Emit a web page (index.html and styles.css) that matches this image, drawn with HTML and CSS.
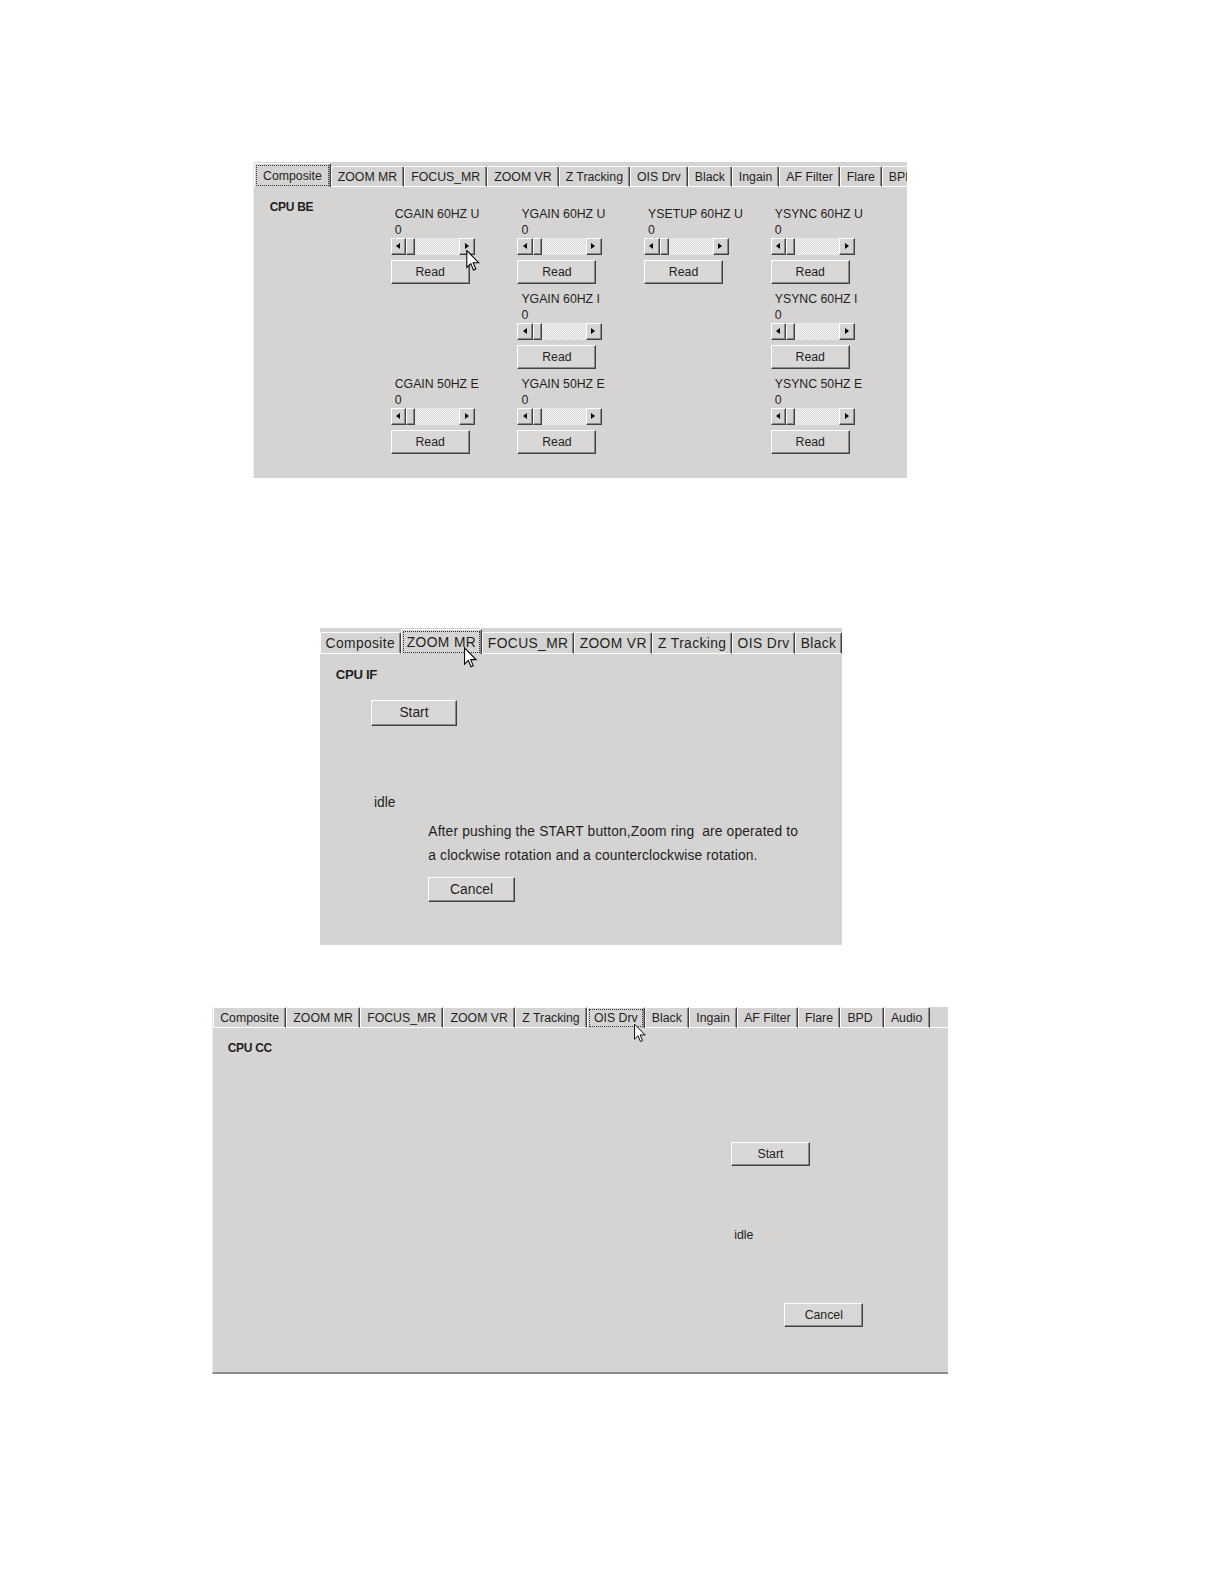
FILE: index.html
```html
<!DOCTYPE html>
<html>
<head>
<meta charset="utf-8">
<link rel="stylesheet" href="styles.css">
</head>
<body>
<div class="page">

  <section class="win p1">
    <div class="tabs">
      <div class="tab sel"><span class="focus">Composite</span></div>
      <div class="tab">ZOOM MR</div>
      <div class="tab">FOCUS_MR</div>
      <div class="tab">ZOOM VR</div>
      <div class="tab">Z Tracking</div>
      <div class="tab">OIS Drv</div>
      <div class="tab">Black</div>
      <div class="tab">Ingain</div>
      <div class="tab">AF Filter</div>
      <div class="tab">Flare</div>
      <div class="tab">BPD</div>
      <div class="fill"></div>
    </div>
    <div class="body">
      <div class="cpu">CPU BE</div>
      <div class="grid">
        <div class="cell"><div class="lbl">CGAIN 60HZ U</div><div class="val">0</div><div class="sb"><span class="arr l"></span><span class="thumb"></span><span class="track"></span><span class="arr r"></span></div><div class="btn">Read</div></div>
        <div class="cell"><div class="lbl">YGAIN 60HZ U</div><div class="val">0</div><div class="sb"><span class="arr l"></span><span class="thumb"></span><span class="track"></span><span class="arr r"></span></div><div class="btn">Read</div></div>
        <div class="cell"><div class="lbl">YSETUP 60HZ U</div><div class="val">0</div><div class="sb"><span class="arr l"></span><span class="thumb"></span><span class="track"></span><span class="arr r"></span></div><div class="btn">Read</div></div>
        <div class="cell"><div class="lbl">YSYNC 60HZ U</div><div class="val">0</div><div class="sb"><span class="arr l"></span><span class="thumb"></span><span class="track"></span><span class="arr r"></span></div><div class="btn">Read</div></div>

        <div class="cell"></div>
        <div class="cell"><div class="lbl">YGAIN 60HZ I</div><div class="val">0</div><div class="sb"><span class="arr l"></span><span class="thumb"></span><span class="track"></span><span class="arr r"></span></div><div class="btn">Read</div></div>
        <div class="cell"></div>
        <div class="cell"><div class="lbl">YSYNC 60HZ I</div><div class="val">0</div><div class="sb"><span class="arr l"></span><span class="thumb"></span><span class="track"></span><span class="arr r"></span></div><div class="btn">Read</div></div>

        <div class="cell"><div class="lbl">CGAIN 50HZ E</div><div class="val">0</div><div class="sb"><span class="arr l"></span><span class="thumb"></span><span class="track"></span><span class="arr r"></span></div><div class="btn">Read</div></div>
        <div class="cell"><div class="lbl">YGAIN 50HZ E</div><div class="val">0</div><div class="sb"><span class="arr l"></span><span class="thumb"></span><span class="track"></span><span class="arr r"></span></div><div class="btn">Read</div></div>
        <div class="cell"></div>
        <div class="cell"><div class="lbl">YSYNC 50HZ E</div><div class="val">0</div><div class="sb"><span class="arr l"></span><span class="thumb"></span><span class="track"></span><span class="arr r"></span></div><div class="btn">Read</div></div>
      </div>
    </div>
    <svg class="cursor" width="14" height="21" viewBox="0 0 12.5 19.5"><path d="M0.5 0.5 L0.5 16.2 L4.2 12.6 L6.7 18.6 L8.9 17.6 L6.4 11.8 L11.6 11.8 Z" fill="#fff" stroke="#000" stroke-width="1"/></svg>
  </section>

  <section class="win p2">
    <div class="tabs">
      <div class="tab">Composite</div>
      <div class="tab sel"><span class="focus">ZOOM MR</span></div>
      <div class="tab">FOCUS_MR</div>
      <div class="tab">ZOOM VR</div>
      <div class="tab">Z Tracking</div>
      <div class="tab">OIS Drv</div>
      <div class="tab">Black</div>
      <div class="fill"></div>
    </div>
    <div class="body">
      <div class="cpu">CPU IF</div>
      <div class="btn start">Start</div>
      <div class="idle">idle</div>
      <div class="note">After pushing the START button,Zoom ring &nbsp;are operated to<br>a clockwise rotation and a counterclockwise rotation.</div>
      <div class="btn cancel">Cancel</div>
    </div>
    <svg class="cursor" width="13" height="21" viewBox="0 0 12.5 19.5"><path d="M0.5 0.5 L0.5 16.2 L4.2 12.6 L6.7 18.6 L8.9 17.6 L6.4 11.8 L11.6 11.8 Z" fill="#fff" stroke="#000" stroke-width="1"/></svg>
  </section>

  <section class="win p3">
    <div class="tabs">
      <div class="tab">Composite</div>
      <div class="tab">ZOOM MR</div>
      <div class="tab">FOCUS_MR</div>
      <div class="tab">ZOOM VR</div>
      <div class="tab">Z Tracking</div>
      <div class="tab sel"><span class="focus">OIS Drv</span></div>
      <div class="tab">Black</div>
      <div class="tab">Ingain</div>
      <div class="tab">AF Filter</div>
      <div class="tab">Flare</div>
      <div class="tab wide">BPD</div>
      <div class="tab">Audio</div>
      <div class="fill"></div>
    </div>
    <div class="body">
      <div class="cpu">CPU CC</div>
      <div class="btn start">Start</div>
      <div class="idle">idle</div>
      <div class="btn cancel">Cancel</div>
    </div>
    <svg class="cursor" width="12" height="20" viewBox="0 0 12.5 19.5"><path d="M0.5 0.5 L0.5 16.2 L4.2 12.6 L6.7 18.6 L8.9 17.6 L6.4 11.8 L11.6 11.8 Z" fill="#fff" stroke="#000" stroke-width="1"/></svg>
  </section>

</div>
</body>
</html>
```

FILE: styles.css
```css
* { box-sizing: border-box; margin: 0; padding: 0; }
html, body { background: #fff; }
body { font-family: "Liberation Sans", Arial, sans-serif; color: #1f1f1f; }

.page { padding-top: 162px; padding-bottom: 200px; }

.win {
  position: relative;
  background: #d5d4d2;
  overflow: hidden;
  font-size: 12.3px;
}

.p1 { margin-left: 253px; width: 654px; height: 316px; border-left: 1px solid #ebebeb; }
.p2 { margin-left: 320px; margin-top: 150px; width: 522px; height: 317px; font-size: 13.8px; }
.p3 { margin-left: 212px; margin-top: 62px; width: 736px; height: 367px; border-left: 1px solid #ebebeb; border-bottom: 2px solid #8c8c8c; }

/* ---------- tab strip ---------- */
.tabs { display: flex; align-items: flex-end; overflow: hidden; }
.p1 .tabs { height: 25px; }
.p2 .tabs { height: 26px; }
.p3 .tabs { height: 21px; }

.tab {
  flex: none;
  display: flex;
  align-items: center;
  height: 21px;
  padding: 0 6px;
  border: 1px solid;
  border-color: #fff #404040 #fff #fff;
  box-shadow: inset -1px 0 #8a8a8a;
  border-radius: 2px 2px 0 0;
  white-space: nowrap;
}
.p2 .tab { height: 22px; padding: 0 4.6px; letter-spacing: 0.4px; }
.p3 .tab { height: 21px; padding: 0 6.2px; }
.p3 .tab.wide { padding-right: 10px; }

.tab.sel { height: 24px; padding: 1px; border-bottom: 0; }
.p2 .tab.sel { height: 25px; padding: 1px; }
.p3 .tab.sel { height: 21px; padding: 1px; }

.focus {
  display: flex;
  align-items: center;
  height: 100%;
  padding: 0 4px;
  border: 1px dotted #333;
}
.p1 .focus { padding: 0 6px; }
.p2 .focus { padding: 0 3px; }

.fill { flex: 1; height: 1px; border-bottom: 1px solid #fff; }

/* ---------- common widgets ---------- */
.btn {
  display: flex;
  align-items: center;
  justify-content: center;
  width: 79px;
  height: 24px;
  border: 1px solid;
  border-color: #fff #404040 #404040 #fff;
  box-shadow: inset -1px -1px #8a8a8a;
  background: #d9d8d6;
}
.p2 .btn { width: 86.6px; height: 25.6px; }

.cpu { font-weight: bold; font-size: 12px; line-height: 16px; letter-spacing: -0.3px; }
.p2 .cpu { font-size: 13.2px; line-height: 18px; }

/* ---------- panel 1 body ---------- */
.p1 .body { display: flex; align-items: flex-start; padding: 11.6px 0 0 15.7px; }
.p1 .cpu { width: 121px; flex: none; }
.grid {
  margin-top: 7.4px;
  display: grid;
  grid-template-columns: repeat(4, 126.7px);
  grid-auto-rows: 78px;
  row-gap: 7px;
}
.lbl { line-height: 16px; padding-left: 4px; white-space: nowrap; }
.val { line-height: 16px; padding-left: 4px; }
.cell .btn { margin-top: 5px; }

.sb { display: flex; width: 84.5px; height: 17px; }
.arr, .thumb {
  flex: none;
  border: 1px solid;
  border-color: #fff #404040 #404040 #fff;
  box-shadow: inset -1px -1px #8a8a8a;
  background: #d5d4d2;
}
.arr { display: flex; align-items: center; justify-content: center; width: 15.6px; }
.arr.r { width: 16px; }
.arr::before { content: ""; width: 0; height: 0; border-top: 3.5px solid transparent; border-bottom: 3.5px solid transparent; }
.arr.l::before { border-right: 4px solid #000; margin-right: 1px; }
.arr.r::before { border-left: 4px solid #000; margin-right: 1px; }
.thumb { width: 9px; }
.track {
  flex: 1;
  background-color: #e6e6e6;
  background-image: repeating-conic-gradient(#f3f3f3 0 25%, #d9d9d9 0 50%);
  background-size: 2px 2px;
}

/* ---------- panel 2 body ---------- */
.p2 .body { padding: 12.1px 0 0 15.7px; }
.p2 .start { margin: 15.9px 0 0 35px; }
.p2 .idle { margin: 69.8px 0 0 38.3px; line-height: 16px; }
.p2 .note { margin: 9.1px 0 0 92.6px; line-height: 23.3px; white-space: nowrap; letter-spacing: 0.15px; }
.p2 .cancel { margin: 9.7px 0 0 92.6px; }

/* ---------- panel 3 body ---------- */
.p3 .body { padding: 11.6px 0 0 14.7px; }
.p3 .start { margin: 86.4px 0 0 503.3px; }
.p3 .idle { margin: 60.7px 0 0 506.6px; line-height: 16px; }
.p3 .cancel { margin: 60.3px 0 0 556.6px; }

/* ---------- mouse pointers (overlay) ---------- */
.cursor { position: absolute; display: block; }
.p1 .cursor { left: 212.3px; top: 88px; }
.p2 .cursor { left: 144px; top: 18.7px; }
.p3 .cursor { left: 421px; top: 16.3px; }
```
